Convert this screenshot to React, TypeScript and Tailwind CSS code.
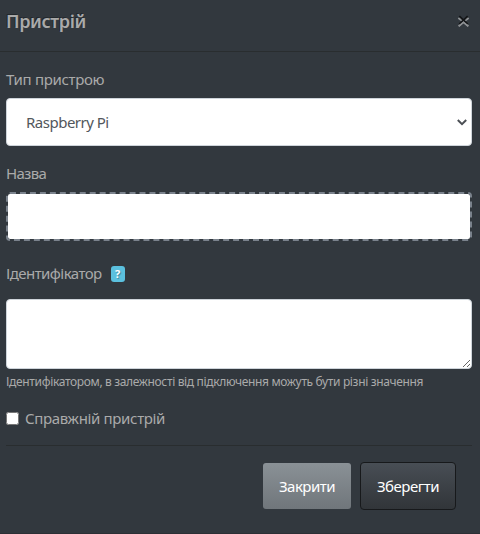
import React from 'react';

const label = 'flex items-center h-6 text-[15px] leading-6 whitespace-nowrap';

export default function App() {
  return (
    <div className="flex h-[534px] w-[480px] flex-col overflow-hidden border-b border-[#2c2f35] bg-[#32383e] font-['Noto_Sans','Open_Sans',sans-serif] text-[#aaaaaa]">
      <header className="flex h-[52px] shrink-0 items-start justify-between border-b border-[#292d2f] pt-2 pr-[10px] pl-[6px]">
        <h5 className="text-[18px] leading-[27px] font-semibold tracking-[-0.35px] whitespace-nowrap [text-shadow:-1px_-1px_0_rgba(0,0,0,0.3)]">
          Пристрій
        </h5>
        <button type="button" aria-label="Закрити" className="mt-[7px] h-[13px] w-[13px]">
          <svg width="13" height="13" viewBox="0 0 13 13" fill="none">
            <path d="M1.7 3 L11.3 11.3 M11.3 3 L1.7 11.3" stroke="#8c8f92" strokeWidth="1.8" />
            <path d="M2.3 1.2 L10.7 9.2 M10.7 1.2 L2.3 9.2" stroke="#131517" strokeWidth="1.8" />
            <path d="M1.3 3 L3.2 4.6 M11.7 3 L9.8 4.6 M1.7 11.3 L6.5 7.2 L11.3 11.3" stroke="#8c8f92" strokeWidth="1.5" />
          </svg>
        </button>
      </header>

      <form className="flex flex-col px-[6px] pr-2">
        <label className={`${label} mt-[15px] tracking-[-0.32px]`}>Тип пристрою</label>
        <div className="mt-[7px] flex h-12 items-center justify-between rounded-[4px] border border-[#ced4da] bg-white pr-1 pl-[19px] text-[15px] text-[#52575c]">
          <span className="tracking-[-0.5px] whitespace-nowrap">Raspberry Pi</span>
          <svg width="10" height="8" viewBox="0 0 10 8" fill="none">
            <path d="M0.8 2 L5 6.1 L9.2 2" stroke="#4b4f54" strokeWidth="2" />
          </svg>
        </div>

        <label className={`${label} mt-[15px] tracking-[-0.7px]`}>Назва</label>
        <input className="mt-[7px] h-[49px] w-full rounded-[4px] border-2 border-dashed border-[#7a828c] bg-white bg-clip-padding outline-none" />

        <label className={`${label} mt-5`}>
          <span className="tracking-[-0.55px]">Ідентифікатор</span>
          <span className="mt-[2px] ml-[9px] flex h-4 w-[14px] items-center justify-center rounded-[3px] bg-[#5bc0de] text-[11px] font-bold text-white [text-shadow:1px_1px_1px_rgba(0,0,0,0.3)]">
            ?
          </span>
        </label>
        <textarea className="mt-[14px] block h-[70px] w-full resize rounded-[4px] border border-[#ced4da] bg-white outline-none" />
        <small className="mt-1 text-[12px] leading-[18px] tracking-[-0.345px] whitespace-nowrap">
          Ідентифікатором, в залежності від підключення можуть бути різні значення
        </small>

        <label className={`${label} mt-[15px]`}>
          <input type="checkbox" className="h-[13px] w-[13px]" />
          <span className="ml-[6px] tracking-[-0.34px]">Справжній пристрій</span>
        </label>

        <footer className="mt-[15px] flex items-center justify-end gap-[9px] border-t border-[#292d2f] pt-4 pr-4 text-[15px] text-white [text-shadow:1px_1px_1px_rgba(0,0,0,0.3)]">
          <button type="button" className="h-[46px] w-[88px] rounded-[3px] bg-linear-to-b from-[#8a9196] to-[#70767b] tracking-[-0.5px]">
            Закрити
          </button>
          <button type="button" className="h-12 w-24 rounded-[4px] border border-[#17191b] bg-linear-to-b from-[#484e55] to-[#313539] tracking-[-0.5px]">
            Зберегти
          </button>
        </footer>
      </form>
    </div>
  );
}
